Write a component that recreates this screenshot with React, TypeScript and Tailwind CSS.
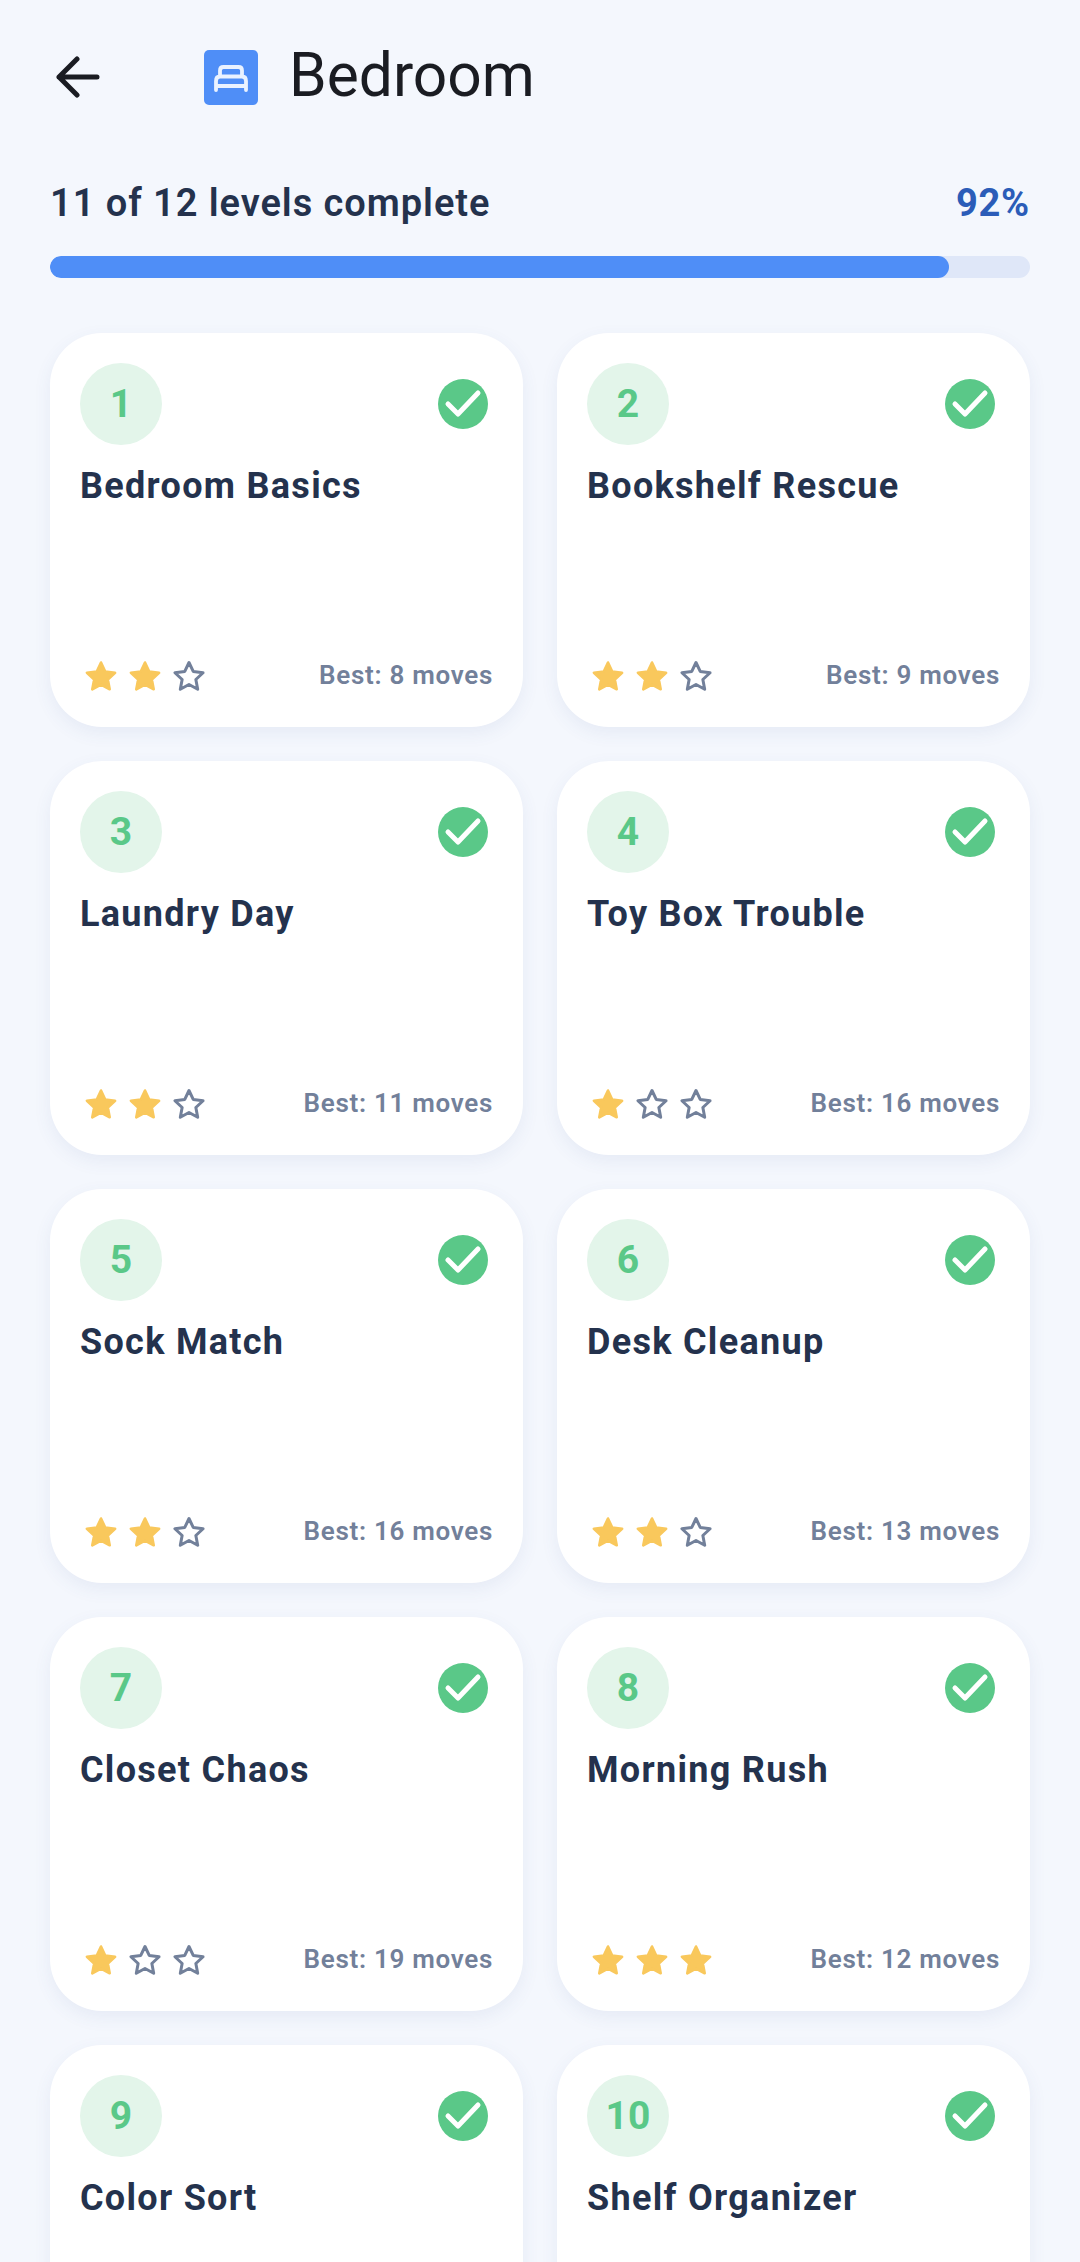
const levels = [
  { n: 1, title: "Bedroom Basics", stars: 2, best: 8 },
  { n: 2, title: "Bookshelf Rescue", stars: 2, best: 9 },
  { n: 3, title: "Laundry Day", stars: 2, best: 11 },
  { n: 4, title: "Toy Box Trouble", stars: 1, best: 16 },
  { n: 5, title: "Sock Match", stars: 2, best: 16 },
  { n: 6, title: "Desk Cleanup", stars: 2, best: 13 },
  { n: 7, title: "Closet Chaos", stars: 1, best: 19 },
  { n: 8, title: "Morning Rush", stars: 3, best: 12 },
  { n: 9, title: "Color Sort", stars: 2, best: 14 },
  { n: 10, title: "Shelf Organizer", stars: 2, best: 15 },
];

function Star({ filled }: { filled: boolean }) {
  return (
    <svg viewBox="0 0 38 38" className="w-[38px] h-[38px]">
      <path
        d="M19 5.5 L23.23 14.48 L33.08 15.73 L25.85 22.52 L27.7 32.27 L19 27.5 L10.3 32.27 L12.15 22.52 L4.92 15.73 L14.77 14.48 Z"
        fill={filled ? "#f9c85c" : "none"}
        stroke={filled ? "#f9c85c" : "#72809a"}
        strokeWidth={filled ? 2.6 : 3}
        strokeLinejoin="round"
      />
    </svg>
  );
}

function Card({ n, title, stars, best }: { n: number; title: string; stars: number; best: number }) {
  return (
    <div className="h-[394px] rounded-[52px] bg-white pt-[30px] px-[30px] pb-[32px] flex flex-col shadow-[0_6px_18px_rgba(60,90,150,0.08)]">
      <div className="flex items-center justify-between">
        <div className="w-[82px] h-[82px] rounded-full bg-[#e3f5ea] flex items-center justify-center text-[39px] font-bold text-[#5ac888]">
          {n}
        </div>
        <svg viewBox="0 0 50 50" className="w-[50px] h-[50px] mr-[5px]">
          <circle cx="25" cy="25" r="25" fill="#5ac888" />
          <path d="M10 25 L20 35 L40 14" fill="none" stroke="#fff" strokeWidth="5" strokeLinecap="round" strokeLinejoin="round" />
        </svg>
      </div>
      <div className="mt-[18px] text-[36px] leading-[46px] font-bold tracking-[1.3px] text-[#24324d]">{title}</div>
      <div className="mt-auto flex items-center justify-between">
        <div className="flex gap-[6px] ml-[2px]">
          {[0, 1, 2].map((i) => (
            <Star key={i} filled={i < stars} />
          ))}
        </div>
        <div className="text-[26px] font-semibold tracking-[0.7px] text-[#72809a]">Best: {best} moves</div>
      </div>
    </div>
  );
}

export default function App() {
  return (
    <div className="h-[2262px] overflow-hidden bg-[#f4f7fd] px-[50px] font-['Roboto',sans-serif]">
      <header className="h-[154px] flex items-center">
        <svg viewBox="0 0 44 42" className="w-[44px] h-[42px] ml-[6px]">
          <path d="M3 21 H41 M21 3 L3 21 L21 39" fill="none" stroke="#1a1c22" strokeWidth="5" strokeLinecap="round" strokeLinejoin="round" />
        </svg>
        <div className="ml-[104px] w-[54px] h-[55px] rounded-[5px] bg-[#4f8ef7] flex items-center justify-center">
          <svg viewBox="0 0 54 55" className="w-[54px] h-[55px]">
            <path
              d="M16 26.5 V20.5 Q16 17 19.5 17 H34.5 Q38 17 38 20.5 V26.5 M12 36 V31 Q12 26.5 16 26.5 H38 Q42 26.5 42 31 V36 Z M12 36 V40 M42 36 V40"
              fill="none"
              stroke="#eaf2ff"
              strokeWidth="3.8"
              strokeLinecap="round"
              strokeLinejoin="round"
            />
          </svg>
        </div>
        <h1 className="ml-[31px] pb-[2px] text-[60.5px] leading-none font-normal text-[#1a1c22]">Bedroom</h1>
      </header>
      <div className="mt-[24px] flex items-center justify-between h-[50px]">
        <span className="text-[38px] font-semibold tracking-[0.95px] text-[#24324d]">11 of 12 levels complete</span>
        <span className="text-[38px] font-bold tracking-[0.8px] text-[#2b5cb8]">92%</span>
      </div>
      <div className="mt-[28px] h-[22px] rounded-full bg-[#dfe7f8] overflow-hidden">
        <div className="h-full w-[899px] rounded-full bg-[#4f8ef7]" />
      </div>
      <div className="mt-[55px] grid grid-cols-2 gap-[34px]">
        {levels.map((l) => (
          <Card key={l.n} {...l} />
        ))}
      </div>
    </div>
  );
}
